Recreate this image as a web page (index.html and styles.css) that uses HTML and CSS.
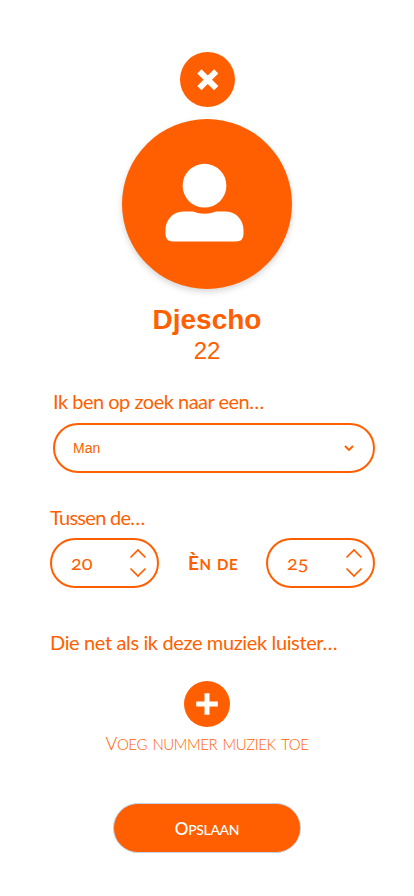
FILE: index.html
```html
<!DOCTYPE html>
<html lang="nl">
<head>
<meta charset="utf-8">
<meta name="viewport" content="width=device-width, initial-scale=1">
<title>Profiel</title>
<link rel="stylesheet" href="styles.css">
</head>
<body>
<main class="profile">
  <button class="close" type="button" aria-label="Sluiten">
    <svg width="55" height="55" viewBox="0 0 55 55"><path d="M19.4 19.3 36.2 36.1M36.2 19.3 19.4 36.1" stroke="#fff" stroke-width="6"/></svg>
  </button>
  <div class="avatar">
    <svg width="170" height="170" viewBox="0 0 170 170" fill="#fff"><circle cx="82.5" cy="66.7" r="21.9"/><path d="M61 92.500H71Q82.500 97 94 92.500H104C115 92.500 121.500 102 121.500 111V115Q121.500 122.500 114 122.500H51Q43.500 122.500 43.500 115V111C43.500 102 50 92.500 61 92.500Z"/></svg>
  </div>
  <h1 class="name">Djescho</h1>
  <p class="age">22</p>

  <section class="field gender">
    <label class="label label-gender">Ik ben op zoek naar een…</label>
    <div class="pill select">
      <span>Man</span>
      <svg width="12" height="8" viewBox="0 0 12 8"><path d="M2 2 6 5.900 10 2"/></svg>
    </div>
  </section>

  <section class="field ages">
    <label class="label label-age">Tussen de…</label>
    <div class="range">
      <div class="pill number"><span>20</span>
        <svg width="18" height="30" viewBox="0 0 18 30"><path d="M1.500 9.500 9 2 16.500 9.500M1.500 20.500 9 28 16.500 20.500"/></svg>
      </div>
      <span class="and">Èn de</span>
      <div class="pill number"><span>25</span>
        <svg width="18" height="30" viewBox="0 0 18 30"><path d="M1.500 9.500 9 2 16.500 9.500M1.500 20.500 9 28 16.500 20.500"/></svg>
      </div>
    </div>
  </section>

  <section class="field music">
    <span class="label label-music">Die net als ik deze muziek luister…</span>
  </section>
  <button class="add" type="button" aria-label="Toevoegen">
    <svg width="46" height="46" viewBox="0 0 46 46"><path d="M12.200 23H33.800M23 12.200V33.800" stroke="#fff" stroke-width="5"/></svg>
  </button>
  <p class="add-text">Voeg nummer muziek toe</p>
  <button class="save" type="button"><span class="save-text">Opslaan</span></button>
</main>
</body>
</html>
```

FILE: styles.css
```css
* { box-sizing: border-box; }
body { margin: 0; background: #fff; color: #ff5f00; font-family: Lato, "Liberation Sans", sans-serif; }
svg { display: block; fill: none; }
button { border: 0; padding: 0; font: inherit; }
.profile { width: 414px; height: 896px; padding-top: 52px; display: flex; flex-direction: column; align-items: center; }
.close { width: 55px; height: 55px; border-radius: 50%; background: #ff5f00; margin-left: 1px; }
.avatar { width: 170px; height: 170px; margin-top: 12px; border-radius: 50%; background: #ff5f00; box-shadow: 0 3px 6px rgba(0, 0, 0, .16); }
.avatar svg { fill: #fff; }
.name { margin: 14px 0 0; font: 700 28px/34px "Liberation Sans", sans-serif; }
.age { margin: 0; font: 24px/28px "Liberation Sans", sans-serif; }
.field { width: 325px; align-self: flex-start; }
.gender { width: 322px; margin: 24px 0 0 53px; }
.ages { margin: 32px 0 0 50px; }
.music { margin: 42px 0 0 50px; }
.label { display: block; height: 24px; line-height: 25px; font-size: 20px; white-space: nowrap; width: max-content; }
.label-gender { letter-spacing: -.5px; }
.label-age { letter-spacing: -.72px; }
.label-music { letter-spacing: -.37px; }
.pill { border: 2px solid #ff5f00; border-radius: 25px; height: 50px; display: flex; align-items: center; justify-content: space-between; }
.select { margin-top: 10px; padding: 0 18px; font: 14px "Liberation Sans", sans-serif; }
.select svg { stroke: #ff5f00; stroke-width: 2; }
.range { display: flex; justify-content: space-between; align-items: center; margin-top: 9px; }
.number { width: 109px; padding: 0 10px 0 19px; font-size: 20px; font-variant-numeric: oldstyle-nums; }
.number span { padding-bottom: 2px; }
.number svg { stroke: #ff5f00; stroke-width: 1.7; }
.and, .add-text, .save-text { display: block; font-variant: small-caps; white-space: nowrap; line-height: 24px; }
.and { font-size: 22px; font-weight: 700; letter-spacing: .4px; padding-bottom: 2px; margin-left: 1px; }
.and::first-letter { font-size: 19px; }
.add { width: 46px; height: 46px; border-radius: 50%; background: #ff5f00; margin-top: 27px; }
.add-text { margin: 3px 0 0; font-size: 21.5px; font-weight: 300; letter-spacing: -.42px; }
.add-text::first-letter { font-size: 18px; }
.save { width: 188px; height: 50px; margin-top: 48px; border: 1px solid #c1d3e3; border-radius: 25px; background: #ff5f00; color: #fff; }
.save-text { font-size: 19.5px; font-weight: 500; letter-spacing: -.35px; }
.save-text::first-letter { font-size: 17px; }
```
